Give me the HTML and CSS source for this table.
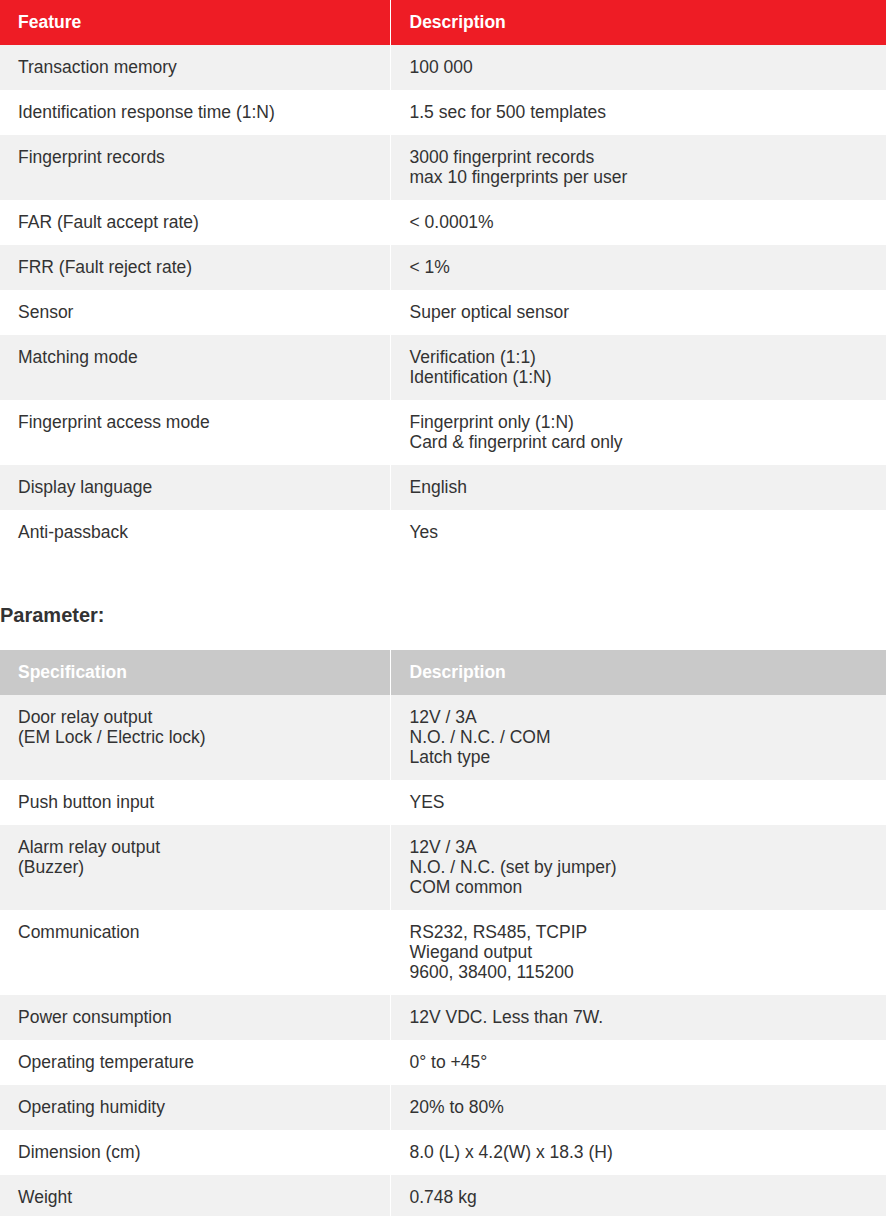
FILE: index.html
```html
<!DOCTYPE html>
<html>
<head>
<meta charset="utf-8">
<link rel="stylesheet" href="styles.css">
</head>
<body>
<table class="spec">
  <colgroup><col class="c1"><col class="c2"></colgroup>
  <thead>
    <tr class="head red"><th>Feature</th><th>Description</th></tr>
  </thead>
  <tbody>
    <tr><td>Transaction memory</td><td>100 000</td></tr>
    <tr><td>Identification response time (1:N)</td><td>1.5 sec for 500 templates</td></tr>
    <tr><td>Fingerprint records</td><td>3000 fingerprint records<br>max 10 fingerprints per user</td></tr>
    <tr><td>FAR (Fault accept rate)</td><td>&lt; 0.0001%</td></tr>
    <tr><td>FRR (Fault reject rate)</td><td>&lt; 1%</td></tr>
    <tr><td>Sensor</td><td>Super optical sensor</td></tr>
    <tr><td>Matching mode</td><td>Verification (1:1)<br>Identification (1:N)</td></tr>
    <tr><td>Fingerprint access mode</td><td>Fingerprint only (1:N)<br>Card &amp; fingerprint card only</td></tr>
    <tr><td>Display language</td><td>English</td></tr>
    <tr><td>Anti-passback</td><td>Yes</td></tr>
  </tbody>
</table>

<h3 class="title">Parameter:</h3>

<table class="spec">
  <colgroup><col class="c1"><col class="c2"></colgroup>
  <thead>
    <tr class="head gray"><th>Specification</th><th>Description</th></tr>
  </thead>
  <tbody>
    <tr><td>Door relay output<br>(EM Lock / Electric lock)</td><td>12V / 3A<br>N.O. / N.C. / COM<br>Latch type</td></tr>
    <tr><td>Push button input</td><td>YES</td></tr>
    <tr><td>Alarm relay output<br>(Buzzer)</td><td>12V / 3A<br>N.O. / N.C. (set by jumper)<br>COM common</td></tr>
    <tr><td>Communication</td><td>RS232, RS485, TCPIP<br>Wiegand output<br>9600, 38400, 115200</td></tr>
    <tr><td>Power consumption</td><td>12V VDC. Less than 7W.</td></tr>
    <tr><td>Operating temperature</td><td>0° to +45°</td></tr>
    <tr><td>Operating humidity</td><td>20% to 80%</td></tr>
    <tr><td>Dimension (cm)</td><td>8.0 (L) x 4.2(W) x 18.3 (H)</td></tr>
    <tr><td>Weight</td><td>0.748 kg</td></tr>
  </tbody>
</table>
</body>
</html>
```
FILE: styles.css
```css
html, body {
  margin: 0;
  padding: 0;
  background: #fff;
}
body {
  font-family: "Liberation Sans", Arial, sans-serif;
  font-size: 17.5px;
  line-height: 20px;
  color: #333;
}
.spec {
  width: 886px;
  border-collapse: collapse;
  border-spacing: 0;
  table-layout: fixed;
}
.spec .c1 { width: 390px; }
.spec th, .spec td {
  text-align: left;
  vertical-align: top;
  padding: 12px 18px 13px 18px;
}
.spec td + td, .spec th + th {
  padding-left: 19px;
}
.spec th {
  font-weight: bold;
  color: #fff;
}
.spec th + th, .spec td + td {
  border-left: 1px solid #fff;
}
.head.red { background: #ee1c25; }
.head.gray { background: #c9c9c9; }
.spec tbody tr:nth-child(odd) { background: #f1f1f1; }
.spec tbody tr:nth-child(even) { background: #fff; }
.title {
  margin: 48px 0 23px 0;
  font-size: 20px;
  line-height: 24px;
  font-weight: bold;
  color: #333;
}
```
